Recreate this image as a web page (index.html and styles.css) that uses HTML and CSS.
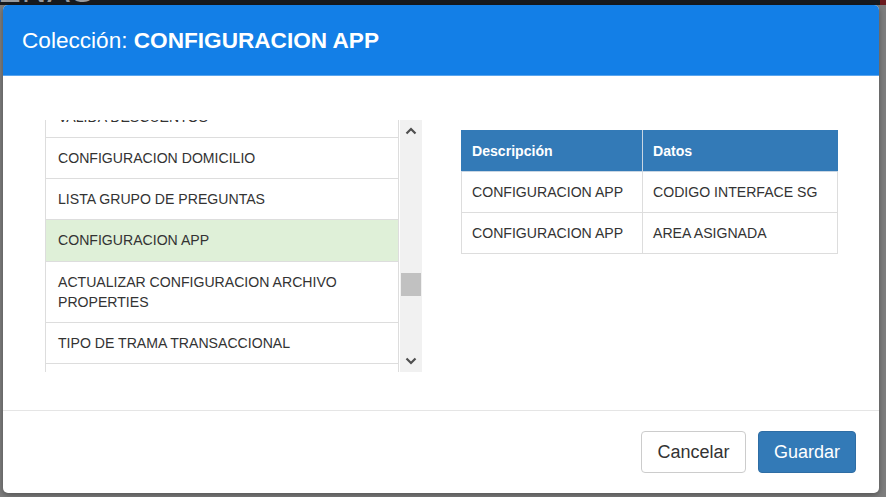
FILE: index.html
```html
<!DOCTYPE html>
<html lang="es">
<head>
<meta charset="utf-8">
<title>Colección: CONFIGURACION APP</title>
<link rel="stylesheet" href="styles.css">
</head>
<body>
<div class="backdrop">
  <div class="topbar"><span class="brand">ENAS</span><span class="corner"></span></div>
</div>

<div class="modal">
  <div class="modal-header">
    <h4 class="modal-title">Colección: <strong>CONFIGURACION APP</strong></h4>
  </div>
  <div class="modal-body">
    <div class="list-wrap">
      <div class="list-viewport">
        <ul class="list-group">
          <li class="list-item">VALIDA DESCUENTOS</li>
          <li class="list-item">CONFIGURACION DOMICILIO</li>
          <li class="list-item">LISTA GRUPO DE PREGUNTAS</li>
          <li class="list-item active">CONFIGURACION APP</li>
          <li class="list-item">ACTUALIZAR CONFIGURACION ARCHIVO PROPERTIES</li>
          <li class="list-item">TIPO DE TRAMA TRANSACCIONAL</li>
          <li class="list-item">&nbsp;</li>
        </ul>
      </div>
      <div class="scrollbar">
        <div class="sb-arrow">
          <svg width="12" height="8" viewBox="0 0 12 8"><path d="M1.5 6.5 L6 2 L10.5 6.5" fill="none" stroke="#4f4f4f" stroke-width="2.2"/></svg>
        </div>
        <div class="sb-track"><div class="sb-thumb"></div></div>
        <div class="sb-arrow">
          <svg width="12" height="8" viewBox="0 0 12 8"><path d="M1.5 1.5 L6 6 L10.5 1.5" fill="none" stroke="#4f4f4f" stroke-width="2.2"/></svg>
        </div>
      </div>
    </div>
    <div class="table-wrap">
      <table class="data-table">
        <thead>
          <tr><th class="col-desc">Descripción</th><th>Datos</th></tr>
        </thead>
        <tbody>
          <tr><td>CONFIGURACION APP</td><td>CODIGO INTERFACE SG</td></tr>
          <tr><td>CONFIGURACION APP</td><td>AREA ASIGNADA</td></tr>
        </tbody>
      </table>
    </div>
  </div>
  <div class="modal-footer">
    <button class="btn btn-default">Cancelar</button>
    <button class="btn btn-primary">Guardar</button>
  </div>
</div>
</body>
</html>
```
FILE: styles.css
```css
* { box-sizing: border-box; }
html, body {
  margin: 0;
  padding: 0;
  width: 886px;
  height: 497px;
  overflow: hidden;
}
body {
  background: #7e7e7e;
  font-family: "Liberation Sans", Arial, sans-serif;
  color: #333;
}
.backdrop {
  width: 886px;
  height: 497px;
}
.topbar {
  height: 5px;
  background: #171a1f;
  position: relative;
  overflow: hidden;
}
.brand {
  position: absolute;
  left: -2px;
  top: -24px;
  font-size: 34px;
  line-height: 28px;
  color: #9a9ca0;
  letter-spacing: 1px;
}
.corner {
  position: absolute;
  right: 0;
  top: 0;
  width: 6px;
  height: 5px;
  background: #6b1a1e;
}

.modal {
  position: absolute;
  left: 3px;
  top: 5px;
  width: 876px;
  height: 488px;
  background: #fff;
  border-radius: 5px;
  overflow: hidden;
  box-shadow: 0 2px 6px rgba(0, 0, 0, 0.35);
  display: flex;
  flex-direction: column;
}
.modal-header {
  height: 71px;
  background: #137fe7;
  border-bottom: 1px solid #5aa5ee;
  display: flex;
  align-items: center;
  padding: 0 19px 0;
}
.modal-title {
  margin: 0;
  font-size: 22.6px;
  font-weight: normal;
  color: #fff;
  line-height: 26px;
  padding-top: 2px;
}
.modal-title strong { font-weight: bold; }

.modal-body {
  height: 334px;
  display: flex;
  align-items: flex-start;
  padding: 44px 0 0 42px;
  gap: 39px;
}
.list-wrap {
  width: 377px;
  height: 252px;
  display: flex;
  gap: 1px;
}
.list-viewport {
  width: 354px;
  height: 252px;
  overflow: hidden;
}
.list-group {
  list-style: none;
  margin: -24px 0 0;
  padding: 0;
}
.list-item {
  border: 1px solid #ddd;
  margin-bottom: -1px;
  padding: 10px 12px;
  font-size: 14.1px;
  line-height: 20px;
  background: #fff;
  color: #333;
}
.list-item.active {
  background: #dff0d8;
  padding-bottom: 11px;
}
.scrollbar {
  width: 22px;
  height: 252px;
  background: #f1f1f1;
  display: flex;
  flex-direction: column;
}
.sb-arrow {
  height: 22px;
  display: flex;
  align-items: center;
  justify-content: center;
}
.sb-track {
  flex: 1;
  padding: 0 1px 0 1px;
}
.sb-thumb {
  margin-top: 131px;
  height: 23px;
  background: #c1c1c1;
}

.table-wrap {
  width: 377px;
  margin-top: 10px;
}
.data-table {
  width: 377px;
  border-collapse: collapse;
  font-size: 14.1px;
  line-height: 20px;
}
.data-table th,
.data-table td {
  border: 1px solid #ddd;
  padding: 10px 10px;
  text-align: left;
}
.data-table th {
  background: #337ab7;
  color: #fff;
  font-weight: bold;
  border-color: #c9d6e3;
  border-top-color: #337ab7;
}
.data-table th:first-child { border-left-color: #337ab7; }
.data-table th:last-child { border-right-color: #337ab7; }
.col-desc { width: 181px; }

.modal-footer {
  border-top: 1px solid #e5e5e5;
  padding: 20px 23px 20px;
  display: flex;
  justify-content: flex-end;
  gap: 12px;
}
.btn {
  font-family: "Liberation Sans", Arial, sans-serif;
  font-size: 18px;
  line-height: 24px;
  height: 42px;
  padding: 8px 15px;
  border-radius: 4px;
  border: 1px solid #ccc;
  cursor: pointer;
}
.btn-default {
  background: #fff;
  color: #333;
  width: 105px;
}
.btn-primary {
  background: #337ab7;
  border-color: #2e6da4;
  color: #fff;
  width: 98px;
}
```
